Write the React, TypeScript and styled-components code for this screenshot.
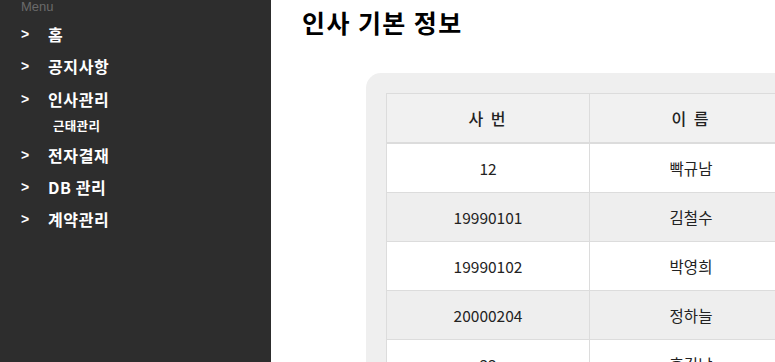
import React from "react";
import styled, { createGlobalStyle } from "styled-components";

const GlobalStyle = createGlobalStyle`
  html, body {
    margin: 0;
    padding: 0;
    overflow: hidden;
    background: #fff;
    font-family: "Noto Sans CJK KR", "Noto Sans", sans-serif;
  }
`;

const menus = [
  { label: "홈" },
  { label: "공지사항" },
  { label: "인사관리", sub: ["근태관리"] },
  { label: "전자결재" },
  { label: "DB 관리" },
  { label: "계약관리" },
];

const rows = [
  { id: "12", name: "빡규남" },
  { id: "19990101", name: "김철수" },
  { id: "19990102", name: "박영희" },
  { id: "20000204", name: "정하늘" },
  { id: "33", name: "홍길남" },
];

function App() {
  return (
    <>
      <GlobalStyle />
      <Layout>
        <Sidebar>
          <MenuTitle>Menu</MenuTitle>
          <MenuList>
            {menus.map((m) => (
              <li key={m.label}>
                <MenuItem>
                  <Arrow>&gt;</Arrow>
                  {m.label}
                </MenuItem>
                {m.sub && m.sub.map((s) => <SubItem key={s}>{s}</SubItem>)}
              </li>
            ))}
          </MenuList>
        </Sidebar>
        <Main>
          <Title>인사 기본 정보</Title>
          <Card>
            <Table>
              <colgroup>
                <col style={{ width: 203 }} />
                <col style={{ width: 203 }} />
              </colgroup>
              <thead>
                <tr>
                  <Th>사 번</Th>
                  <Th>이 름</Th>
                </tr>
              </thead>
              <tbody>
                {rows.map((r, i) => (
                  <Row key={r.id} $even={i % 2 === 1}>
                    <Td>{r.id}</Td>
                    <Td>{r.name}</Td>
                  </Row>
                ))}
              </tbody>
            </Table>
          </Card>
        </Main>
      </Layout>
    </>
  );
}

export default App;

const Layout = styled.div`
  display: flex;
  width: 775px;
  height: 362px;
  overflow: hidden;
`;

const Sidebar = styled.nav`
  flex: 0 0 271px;
  background: #2d2d2d;
  color: #fff;
  padding: 0 0 0 21px;
  box-sizing: border-box;
`;

const MenuTitle = styled.div`
  color: #6a6a6a;
  font-family: "Liberation Sans", Arial, sans-serif;
  font-size: 13px;
  line-height: 14px;
`;

const MenuList = styled.ul`
  list-style: none;
  margin: 4px 0 0;
  padding: 0;
`;

const MenuItem = styled.div`
  display: flex;
  align-items: center;
  height: 32.3px;
  font-size: 16px;
  font-weight: 700;
  letter-spacing: 0.6px;
`;

const Arrow = styled.span`
  width: 27px;
  font-family: "Liberation Sans", Arial, sans-serif;
  font-size: 14px;
  letter-spacing: 0;
`;

const SubItem = styled.div`
  font-size: 12.5px;
  font-weight: 700;
  letter-spacing: 0.3px;
  padding-left: 32px;
  height: 22px;
  line-height: 22px;
  margin-bottom: 1.5px;
`;

const Main = styled.main`
  flex: 1;
  min-width: 0;
  padding: 4px 0 0 31px;
`;

const Title = styled.h1`
  margin: 0;
  font-size: 25px;
  font-weight: 700;
  letter-spacing: 1.4px;
  line-height: 36px;
  color: #000;
`;

const Card = styled.div`
  margin: 33px 0 0 64px;
  width: 700px;
  padding: 20px;
  background: #efefef;
  border-radius: 15px 0 0 0;
`;

const Table = styled.table`
  border-collapse: collapse;
  table-layout: fixed;
  font-size: 15.5px;
  color: #222;
  text-align: center;
`;

const Th = styled.th`
  height: 48px;
  padding: 0;
  font-weight: 500;
  font-size: 16px;
  letter-spacing: 2px;
  background: #f1f1f1;
  border: 1px solid #dcdcdc;
  border-bottom: 2px solid #dcdcdc;
`;

const Row = styled.tr<{ $even: boolean }>`
  background: ${(p) => (p.$even ? "#eeeeee" : "#ffffff")};
`;

const Td = styled.td`
  height: 48px;
  border: 1px solid #dcdcdc;
  padding: 0;
`;
